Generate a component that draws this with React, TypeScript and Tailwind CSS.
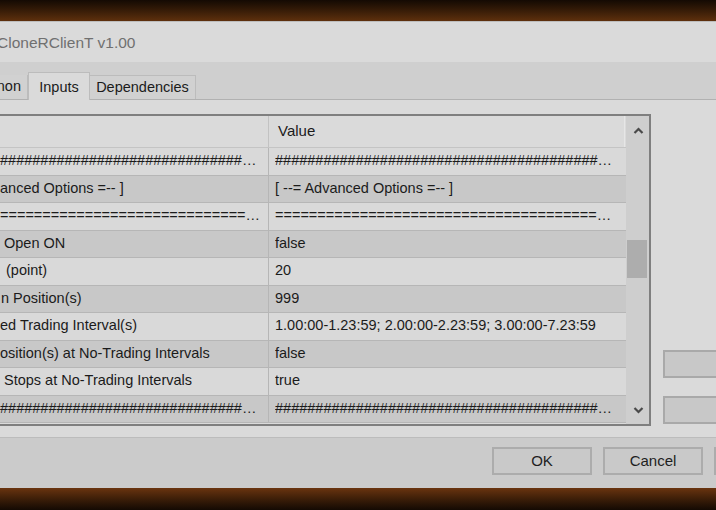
import React from 'react'

const HASH = '#'.repeat(60)
const EQ = '='.repeat(60)

type Row = {
  name: string
  value: string
  nameClass?: string
}

// visible part of the inputs grid (left column is cut by the window edge)
const rows: Row[] = [
  { name: HASH, value: HASH },
  { name: 'anced Options =-- ]', value: '[ --= Advanced Options =-- ]' },
  { name: EQ, value: EQ },
  { name: 'Open ON', value: 'false', nameClass: 'pl-[4px]' },
  { name: '(point)', value: '20', nameClass: 'pl-[6px]' },
  { name: 'n Position(s)', value: '999', nameClass: 'pl-[1px]' },
  {
    name: 'ed Trading Interval(s)',
    value: '1.00:00-1.23:59; 2.00:00-2.23:59; 3.00:00-7.23:59',
  },
  { name: 'osition(s) at No-Trading Intervals', value: 'false' },
  { name: 'Stops at No-Trading Intervals', value: 'true', nameClass: 'pl-[4px]' },
  { name: HASH, value: HASH },
]

const Chevron = ({ down = false }: { down?: boolean }) => (
  <svg width="11" height="8" viewBox="0 0 11 8" className="block">
    <polyline
      points={down ? '1.5,2 5.5,6 9.5,2' : '1.5,6 5.5,2 9.5,6'}
      fill="none"
      stroke="#4a4a4a"
      strokeWidth={2.2}
    />
  </svg>
)

const DialogButton = ({ label }: { label?: string }) => (
  <div className="w-[100px] h-[28px] shrink-0 flex items-center justify-center bg-[#c9c9c9] border-2 border-[#acacac] text-[15px] text-[#1e1e1e]">
    {label}
  </div>
)

export default function App() {
  return (
    <div
      className="w-[716px] h-[510px] overflow-hidden flex flex-col bg-[#d9d9d9] text-[#1b1b1b]"
      style={{ fontFamily: '"Liberation Sans", Arial, sans-serif' }}
    >
      {/* desktop behind the window */}
      <div className="h-[21px] shrink-0 bg-gradient-to-b from-[#140a03] to-[#5e300d]" />

      {/* title */}
      <div className="h-[41px] shrink-0 flex items-center pt-[2px] bg-[#dadada] border-t border-[#bdbdbd]">
        <span className="-ml-[3px] text-[15.5px] text-[#707070] whitespace-nowrap">
          CloneRClienT v1.00
        </span>
      </div>

      {/* tab strip */}
      <div className="h-[38px] shrink-0 flex items-end bg-[#cfcfcf] border-b border-[#b1b1b1]">
        <div className="h-[24px] w-[28px] flex items-center justify-end pr-[6px] bg-[#d1d1d1] border-r border-[#bcbcbc] text-[14.5px]">
          non
        </div>
        <div className="h-[28px] w-[62px] -mb-px flex items-start justify-center pt-[4px] bg-[#dadada] border-x border-t border-[#bcbcbc] text-[14.5px]">
          Inputs
        </div>
        <div className="h-[24px] w-[106px] flex items-center justify-center bg-[#d1d1d1] border-r border-t border-[#bcbcbc] text-[14.5px]">
          Dependencies
        </div>
      </div>

      {/* tab page */}
      <div className="h-[338px] shrink-0 bg-[#dadada] pt-[14px] flex border-b border-[#bcbcbc]">
        {/* inputs grid */}
        <div className="w-[651px] h-[312px] shrink-0 flex border-y-2 border-r-2 border-[#7f7f7f] bg-[#dadada]">
          <div className="flex-1 flex flex-col">
            <div className="h-[32px] grid grid-cols-[269px_1fr] border-b border-[#c4c4c4]">
              <div className="border-r border-[#c2c2c2]" />
              <div className="flex items-center pl-[9px] text-[15px] border-r border-[#e6e6e6] mr-[1px]">
                Value
              </div>
            </div>
            {rows.map((row, i) => (
              <div
                key={i}
                className={`h-[27.5px] grid grid-cols-[269px_1fr] text-[14.5px] border-b border-[#b6b6b6] ${
                  i % 2 === 1 ? 'bg-[#c8c8c8]' : 'bg-[#d9d9d9]'
                }`}
              >
                <div className="min-w-0 flex items-center border-r border-[#b6b6b6] overflow-hidden pr-[6px]">
                  <span className={`min-w-0 truncate whitespace-nowrap ${row.nameClass ?? ''}`}>
                    {row.name}
                  </span>
                </div>
                <div className="min-w-0 flex items-center overflow-hidden pl-[6px] pr-[12px]">
                  <span className="min-w-0 truncate whitespace-nowrap">{row.value}</span>
                </div>
              </div>
            ))}
          </div>

          {/* scrollbar */}
          <div className="w-[23px] shrink-0 flex flex-col bg-[#cecece] pl-px">
            <div className="h-[30px] flex items-center justify-center">
              <Chevron />
            </div>
            <div className="h-[94px]" />
            <div className="h-[38px] w-[20px] bg-[#adadad]" />
            <div className="flex-1" />
            <div className="h-[28px] flex items-center justify-center">
              <Chevron down />
            </div>
          </div>
        </div>

        {/* side buttons, cut by the edge */}
        <div className="flex flex-col pl-[12px] pt-[236px] gap-[18px]">
          <div className="w-[80px] h-[28px] bg-[#c8c8c8] border-2 border-[#a9a9a9]" />
          <div className="w-[80px] h-[28px] bg-[#c8c8c8] border-2 border-[#a9a9a9]" />
        </div>
      </div>

      {/* footer */}
      <div className="h-[50px] shrink-0 bg-[#cbcbcb] flex pl-[492px] pt-[9px] gap-[11px]">
        <DialogButton label="OK" />
        <DialogButton label="Cancel" />
        <DialogButton />
      </div>

      <div className="flex-1 bg-gradient-to-b from-[#6a340f] to-[#140a03]" />
    </div>
  )
}
